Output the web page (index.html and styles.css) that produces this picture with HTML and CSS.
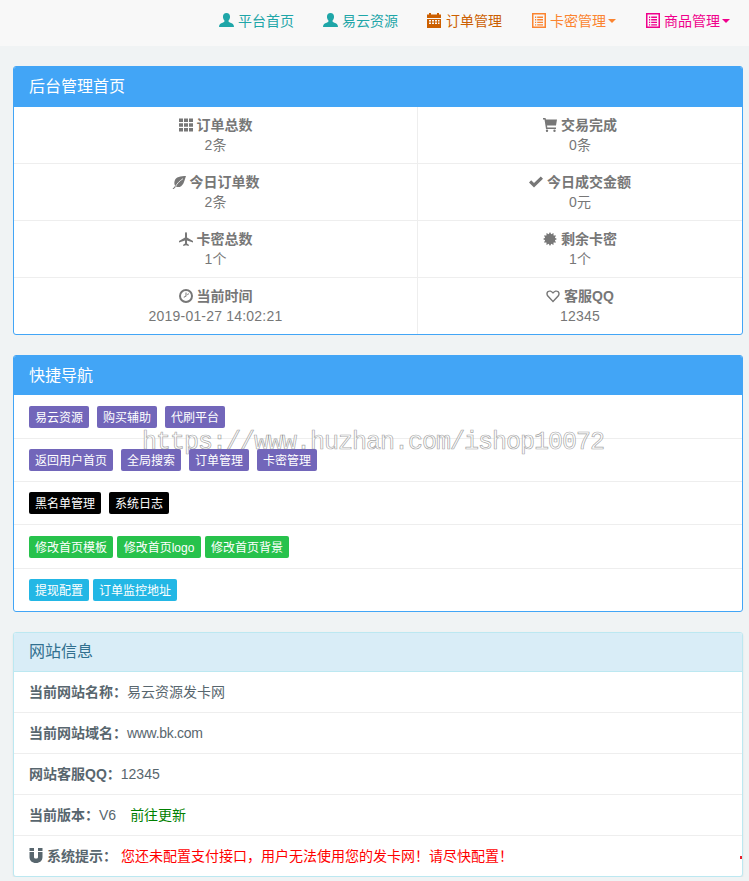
FILE: index.html
```html
<!DOCTYPE html>
<html lang="zh-CN">
<head>
    <meta charset="UTF-8">
    <meta name="viewport" content="width=device-width, initial-scale=1.0">
    <title>后台管理首页</title>
    <link rel="stylesheet" href="styles.css">
</head>
<body>
    <nav class="navbar">
        <a class="nav-link teal" href="#">
            <svg class="icon" viewBox="1 .5 14 15" preserveAspectRatio="none"><path d="M8 .5c2.100 0 3.300 1.600 3.300 3.800 0 1.700-.7 3.100-1.500 3.900 0 .9.6 1.500 1.800 2 1.800.7 3.400 1.400 3.400 4.300H1c0-2.900 1.600-3.600 3.400-4.300 1.200-.5 1.800-1.100 1.800-2-.8-.8-1.500-2.200-1.500-3.900C4.700 2.100 5.900.5 8 .5z"/></svg>
            <span>平台首页</span>
        </a>
        <a class="nav-link teal" href="#">
            <svg class="icon" viewBox="1 .5 14 15" preserveAspectRatio="none"><path d="M8 .5c2.100 0 3.300 1.600 3.300 3.800 0 1.700-.7 3.100-1.500 3.900 0 .9.6 1.500 1.800 2 1.800.7 3.400 1.400 3.400 4.300H1c0-2.900 1.600-3.600 3.400-4.300 1.200-.5 1.800-1.100 1.800-2-.8-.8-1.500-2.200-1.500-3.900C4.700 2.100 5.900.5 8 .5z"/></svg>
            <span>易云资源</span>
        </a>
        <a class="nav-link brown" href="#">
            <svg class="icon" viewBox="1 .5 14 15" preserveAspectRatio="none"><path d="M1 2h2V.5h2V2h6V.5h2V2h2v3.500H1zM1 6.500h14V15.500H1zm2 1v1.500h2V7.500zm3 0v1.500h2V7.500zm3 0v1.500h2V7.500zm3 0v1.500h1.500V7.500zM3 10v1.500h2V10zm3 0v1.500h2V10zm3 0v1.500h2V10zm3 0v1.500h1.500V10z" fill-rule="evenodd"/></svg>
            <span>订单管理</span>
        </a>
        <a class="nav-link orange" href="#">
            <svg class="icon" viewBox="1 .5 14 15" preserveAspectRatio="none"><path d="M1 .5h14v15H1zm1.500 1.500v12h11V2zM4 4h1.200v1.400H4zm2.200 0H12v1.400H6.200zM4 6.600h1.200V8H4zm2.200 0H12V8H6.200zM4 9.200h1.200v1.400H4zm2.200 0H12v1.400H6.200zM4 11.800h1.200v1.200H4zm2.200 0H12v1.200H6.200z" fill-rule="evenodd"/></svg>
            <span>卡密管理</span><span class="caret"></span>
        </a>
        <a class="nav-link pink" href="#">
            <svg class="icon" viewBox="1 .5 14 15" preserveAspectRatio="none"><path d="M1 .5h14v15H1zm1.500 1.500v12h11V2zM4 4h1.200v1.400H4zm2.200 0H12v1.400H6.200zM4 6.600h1.200V8H4zm2.200 0H12V8H6.200zM4 9.200h1.200v1.400H4zm2.200 0H12v1.400H6.200zM4 11.800h1.200v1.200H4zm2.200 0H12v1.200H6.200z" fill-rule="evenodd"/></svg>
            <span>商品管理</span><span class="caret"></span>
        </a>
    </nav>

    <div class="content">
        <section class="panel panel-primary">
            <h3 class="panel-heading">后台管理首页</h3>
            <div class="stats">
                <div class="stat">
                    <b><svg class="icon" viewBox="0 0 14 14"><path d="M0 .5h4V4H0zM5 .5h4V4H5zM10 .5h4V4h-4zM0 5.200h4v3.500H0zM5 5.200h4v3.500H5zM10 5.200h4v3.500h-4zM0 10h4v3.500H0zM5 10h4v3.500H5zM10 10h4v3.500h-4z"/></svg> 订单总数</b>
                    <span>2条</span>
                </div>
                <div class="stat">
                    <b><svg class="icon" viewBox="0 0 14 14"><path d="M0 0h2.500L3 1.500h11L13 7.500H4l.3 2H13V11H3L1.500 1.500H0zM4 11.500a1.200 1.200 0 1 1 0 2.400 1.200 1.200 0 0 1 0-2.400zM11.500 11.500a1.200 1.200 0 1 1 0 2.400 1.200 1.200 0 0 1 0-2.400z"/></svg> 交易完成</b>
                    <span>0条</span>
                </div>
                <div class="stat">
                    <b><svg class="icon" viewBox="0 0 14 14"><path d="M14 1C9 1 3.500 1.500 2.500 6.500c-.4 1.800 0 3.300.7 4.300L.5 14h1.300l2.300-2.500c1.200.8 3.200.9 5-.3C12 9.200 12.500 5 14 1z"/><path class="vein" d="M3.500 11.500C5 8.500 7.500 6 11 3.700"/></svg> 今日订单数</b>
                    <span>2条</span>
                </div>
                <div class="stat">
                    <b><svg class="icon" viewBox="0 0 14 14"><path d="M0 7.500 2.200 5.300 5 8 11.800 1.500 14 3.700 5 12.500z"/></svg> 今日成交金额</b>
                    <span>0元</span>
                </div>
                <div class="stat">
                    <b><svg class="icon" viewBox="0 0 14 14"><path d="M7 0c.7 0 1 1 1 2v3.500l6 3.500v1.500L8 8.500v3l1.800 1.300V14L7 13.300 4.200 14v-1.200L6 11.500v-3L0 10.500V9l6-3.500V2c0-1 .3-2 1-2z"/></svg> 卡密总数</b>
                    <span>1个</span>
                </div>
                <div class="stat">
                    <b><svg class="icon" viewBox="0 0 14 14"><polygon points="7,0 8.290,2.170 10.500,.94 10.540,3.460 13.060,3.500 11.830,5.710 14,7 11.830,8.290 13.060,10.500 10.540,10.540 10.500,13.060 8.290,11.830 7,14 5.710,11.830 3.500,13.060 3.460,10.540 .94,10.500 2.170,8.290 0,7 2.170,5.710 .94,3.500 3.460,3.460 3.500,.94 5.710,2.170"/></svg> 剩余卡密</b>
                    <span>1个</span>
                </div>
                <div class="stat">
                    <b><svg class="icon" viewBox="0 0 14 14"><path d="M7 0a7 7 0 1 1 0 14A7 7 0 0 1 7 0zm0 2a5 5 0 1 0 0 10A5 5 0 0 0 7 2zM6.500 3.500h1v3.800L5 8.800l-.5-.8 2-1.200zM9.300 4.200l.7.600-1.200 1.400-.7-.6z" fill-rule="evenodd"/></svg> 当前时间</b>
                    <span>2019-01-27 14:02:21</span>
                </div>
                <div class="stat">
                    <b><svg class="icon" viewBox="0 0 14 14"><path d="M7 13.500 1.300 7.500C-.2 5.800 0 3.200 1.700 2c1.700-1.100 3.900-.7 5.300 1.100C8.400 1.300 10.600.9 12.300 2c1.700 1.200 1.900 3.800.4 5.500zM7 11.500l4.600-5c1-1.100.9-2.700-.2-3.400-1.200-.8-2.900-.2-3.900 1.400h-1C5.500 2.900 3.800 2.300 2.600 3.100c-1.100.7-1.200 2.300-.2 3.400z" fill-rule="evenodd"/></svg> 客服QQ</b>
                    <span>12345</span>
                </div>
            </div>
        </section>

        <section class="panel panel-primary">
            <h3 class="panel-heading">快捷导航</h3>
            <div class="links">
                <div class="link-row wide-gap">
                    <a class="btn purple" href="#">易云资源</a>
                    <a class="btn purple" href="#">购买辅助</a>
                    <a class="btn purple" href="#">代刷平台</a>
                </div>
                <div class="link-row wide-gap">
                    <a class="btn purple" href="#">返回用户首页</a>
                    <a class="btn purple" href="#">全局搜索</a>
                    <a class="btn purple" href="#">订单管理</a>
                    <a class="btn purple" href="#">卡密管理</a>
                </div>
                <div class="link-row wide-gap">
                    <a class="btn black" href="#">黑名单管理</a>
                    <a class="btn black" href="#">系统日志</a>
                </div>
                <div class="link-row tall">
                    <a class="btn green" href="#">修改首页模板</a>
                    <a class="btn green" href="#">修改首页logo</a>
                    <a class="btn green" href="#">修改首页背景</a>
                </div>
                <div class="link-row">
                    <a class="btn cyan" href="#">提现配置</a>
                    <a class="btn cyan" href="#">订单监控地址</a>
                </div>
            </div>
        </section>

        <section class="panel panel-info">
            <h3 class="panel-heading">网站信息</h3>
            <ul class="info">
                <li><b>当前网站名称：</b>易云资源发卡网</li>
                <li><b>当前网站域名：</b><span class="domain">www.bk.com</span></li>
                <li><b>网站客服QQ：</b>12345</li>
                <li><b>当前版本：</b>V6<a class="update" href="#">前往更新</a></li>
                <li class="notice">
                    <svg class="icon magnet" viewBox="0 0 14 15"><path d="M.5 0h4.500v3H.500zM9 0h4.500v3H9zM.5 4H5v5c0 1 .7 1.600 2 1.600S9 10 9 9V4h4.500v5c0 3.800-2.700 6-6.500 6S.5 12.800.5 9z"/></svg>
                    <b>系统提示：</b><span class="warn">您还未配置支付接口，用户无法使用您的发卡网！请尽快配置！</span>
                    <i class="corner-mark"></i>
                </li>
            </ul>
        </section>
    </div>

    <div class="watermark">https://www.huzhan.com/ishop10072</div>
</body>
</html>
```

FILE: styles.css
```css
* {
    box-sizing: border-box;
}
body {
    margin: 0;
    background-color: #f0f3f4;
    color: #777;
    font-family: "Liberation Sans", "Noto Sans CJK SC", sans-serif;
    font-size: 14px;
    line-height: 20px;
}
a {
    text-decoration: none;
}
.icon {
    display: inline-block;
    width: 14px;
    height: 14px;
    fill: currentColor;
    vertical-align: -2px;
}
.vein {
    fill: none;
    stroke: #fff;
    stroke-width: 0.8;
}
.navbar {
    display: flex;
    justify-content: flex-end;
    height: 46px;
    padding-right: 4px;
    background-color: #f8f8f8;
}
.nav-link {
    display: flex;
    align-items: center;
    gap: 4px;
    height: 31px;
    padding: 11px 15px 0;
    white-space: nowrap;
}
.nav-link .icon {
    height: 15px;
    margin-top: -2px;
}
.nav-link.teal .icon {
    width: 15px;
    margin-left: -1px;
}
.nav-link.brown .icon {
    margin-left: -1px;
    margin-right: 1px;
}
.teal { color: #1fa6a8; }
.brown { color: #cc5f00; }
.orange { color: #fb8430; }
.pink { color: #f0008c; }
.caret {
    width: 0;
    height: 0;
    margin-left: -2px;
    border-top: 4px solid currentColor;
    border-left: 4px solid transparent;
    border-right: 4px solid transparent;
}
.content {
    padding: 20px 6px 0 13px;
}
.panel {
    margin-bottom: 20px;
    background-color: #fff;
    border: 1px solid #42a5f6;
    border-radius: 3px;
    overflow: hidden;
}
.panel:last-child {
    margin-bottom: 0;
}
.panel-heading {
    height: 39px;
    margin: 0;
    padding: 10px 15px 0;
    font-size: 16px;
    font-weight: 400;
    line-height: 20px;
    color: #fff;
    background-color: #42a5f6;
}
.panel:first-child .panel-heading {
    height: 40px;
}
.panel-info {
    border-color: #bce8f1;
    box-shadow: 0 1px 2px rgba(0, 0, 0, 0.08);
}
.panel-info .panel-heading {
    padding-top: 9px;
    color: #31708f;
    background-color: #d9edf7;
    border-bottom: 1px solid #bce8f1;
}
.stats {
    display: grid;
    grid-template-columns: 404px 1fr;
}
.stat {
    display: flex;
    flex-direction: column;
    align-items: center;
    height: 57px;
    padding-top: 8px;
    border-top: 1px solid #eeeeee;
    border-right: 1px solid #eeeeee;
    letter-spacing: 0.2px;
}
.stat b {
    letter-spacing: 0;
}
.stat:nth-child(-n+2) {
    border-top: 0;
    height: 56px;
}
.stat:nth-child(even) {
    border-right: 0;
}
.links {
    display: flex;
    flex-direction: column;
}
.link-row {
    display: flex;
    gap: 4px;
    height: 43px;
    padding: 10px 15px 0;
    border-top: 1px solid #eeeeee;
}
.link-row:first-child {
    padding-top: 11px;
    border-top: 0;
}
.link-row.tall {
    height: 44px;
    padding-top: 11px;
}
.wide-gap {
    gap: 8px;
}
.btn {
    height: 22px;
    padding: 2px 6px 0;
    border-radius: 2px;
    color: #fff;
    font-size: 12px;
    line-height: 20px;
    text-align: center;
    white-space: nowrap;
}
.purple { background-color: #7266ba; }
.black { background-color: #000; }
.green { min-width: 84px; background-color: #27c24c; }
.cyan { background-color: #23b7e5; }
.info {
    margin: 0;
    padding: 0;
    list-style: none;
    color: #58666e;
}
.info li {
    height: 41px;
    padding: 10px 15px;
    border-top: 1px solid #eeeeee;
}
.info li:first-child {
    height: 40px;
    border-top: 0;
}
.domain {
    letter-spacing: -0.3px;
}
.update {
    margin-left: 14px;
    color: #008000;
}
.notice {
    position: relative;
}
.magnet {
    height: 15px;
}
.warn {
    margin-left: 4px;
    color: #f00;
}
.corner-mark {
    position: absolute;
    top: 20px;
    right: 0;
    width: 2px;
    height: 3px;
    background-color: #e8202c;
}
.watermark {
    position: absolute;
    top: 429px;
    left: 142px;
    color: rgba(255, 255, 255, 0.75);
    font-family: "Liberation Mono", monospace;
    font-size: 25px;
    letter-spacing: -1px;
    line-height: 28px;
    white-space: nowrap;
    -webkit-text-stroke: 0.7px rgba(125, 125, 125, 0.7);
    pointer-events: none;
}
```
